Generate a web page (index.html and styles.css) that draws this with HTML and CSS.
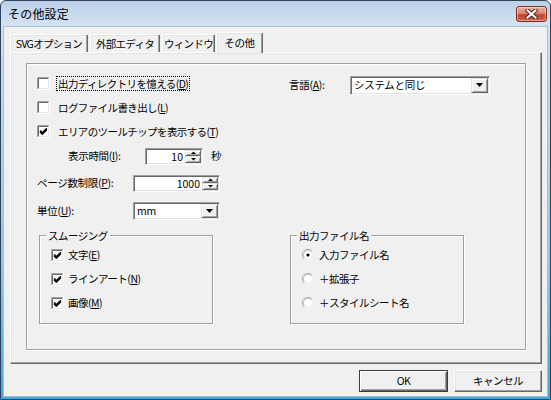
FILE: index.html
```html
<!DOCTYPE html>
<html lang="ja">
<head>
<meta charset="utf-8">
<title>その他設定</title>
<link rel="stylesheet" href="styles.css">
</head>
<body>
<div class="window">
  <div class="titlebar">
    <span class="title">その他設定</span>
    <div class="close">
      <svg width="13" height="10" viewBox="0 0 13 10">
        <path d="M2.5 1.5 L10.5 8.5 M10.5 1.5 L2.5 8.5" stroke="#5b1d12" stroke-width="4.2" stroke-linecap="square" fill="none"/>
        <path d="M2.5 1.5 L10.5 8.5 M10.5 1.5 L2.5 8.5" stroke="#ffffff" stroke-width="2.2" stroke-linecap="square" fill="none"/>
      </svg>
    </div>
  </div>
  <div class="client">
    <div class="tabs">
      <div class="tab t1">SVGオプション</div>
      <div class="tab t2">外部エディタ</div>
      <div class="tab t3">ウィンドウ</div>
      <div class="tab t4 active">その他</div>
    </div>
    <div class="panel">
      <div class="page">
        <div class="top">
          <div class="lcol">
            <div class="row r24">
              <svg class="cb" width="13" height="13" viewBox="0 0 13 13"><rect x="0" y="0" width="13" height="13" fill="#fff"/><path d="M0.5 12V0.5H12" stroke="#a0a0a0" fill="none"/><path d="M1.5 11V1.5H11" stroke="#696969" fill="none"/><path d="M1 11.5H11.5V1" stroke="#e3e3e3" fill="none"/></svg>
              <span class="lbl focus">出力ディレクトリを憶える(<u>D</u>)</span>
            </div>
            <div class="row r24">
              <svg class="cb" width="13" height="13" viewBox="0 0 13 13"><rect x="0" y="0" width="13" height="13" fill="#fff"/><path d="M0.5 12V0.5H12" stroke="#a0a0a0" fill="none"/><path d="M1.5 11V1.5H11" stroke="#696969" fill="none"/><path d="M1 11.5H11.5V1" stroke="#e3e3e3" fill="none"/></svg>
              <span class="lbl">ログファイル書き出し(<u>L</u>)</span>
            </div>
            <div class="row r24">
              <svg class="cb" width="13" height="13" viewBox="0 0 13 13"><rect x="0" y="0" width="13" height="13" fill="#fff"/><path d="M0.5 12V0.5H12" stroke="#a0a0a0" fill="none"/><path d="M1.5 11V1.5H11" stroke="#696969" fill="none"/><path d="M1 11.5H11.5V1" stroke="#e3e3e3" fill="none"/><path d="M3 5.5 L5.3 7.8 L9.8 3.3 M3 6.8 L5.3 9.1 L9.8 4.6" stroke="#000" stroke-width="1.5" fill="none"/></svg>
              <span class="lbl">エリアのツールチップを表示する(<u>T</u>)</span>
            </div>
            <div class="row r26 indent">
              <span class="flabel w77">表示時間(<u>I</u>):</span>
              <div class="spin w58">
                <span class="sval">10</span>
                <span class="sbtns">
                  <span class="sbtn"><svg width="5" height="3" viewBox="0 0 5 3"><path d="M0 3H5L2.5 0.5Z" fill="#000"/></svg></span>
                  <span class="sbtn"><svg width="5" height="3" viewBox="0 0 5 3"><path d="M0 0H5L2.5 2.5Z" fill="#000"/></svg></span>
                </span>
              </div>
              <span class="unit">秒</span>
            </div>
            <div class="row r28">
              <span class="flabel w96">ページ数制限(<u>P</u>):</span>
              <div class="spin w87">
                <span class="sval">1000</span>
                <span class="sbtns">
                  <span class="sbtn"><svg width="5" height="3" viewBox="0 0 5 3"><path d="M0 3H5L2.5 0.5Z" fill="#000"/></svg></span>
                  <span class="sbtn"><svg width="5" height="3" viewBox="0 0 5 3"><path d="M0 0H5L2.5 2.5Z" fill="#000"/></svg></span>
                </span>
              </div>
            </div>
            <div class="row r28">
              <span class="flabel w96">単位(<u>U</u>):</span>
              <div class="combo w87">
                <span class="cval">mm</span>
                <span class="dd"><svg width="7" height="4" viewBox="0 0 7 4"><path d="M0 0H7L3.5 4Z" fill="#000"/></svg></span>
              </div>
            </div>
          </div>
          <div class="rcol">
            <div class="row r28">
              <span class="flabel w61">言語(<u>A</u>):</span>
              <div class="combo w140 h19">
                <span class="cval">システムと同じ</span>
                <span class="dd"><svg width="7" height="4" viewBox="0 0 7 4"><path d="M0 0H7L3.5 4Z" fill="#000"/></svg></span>
              </div>
            </div>
          </div>
        </div>
        <div class="bottom">
          <div class="group g1">
            <span class="legend">スムージング</span>
            <div class="grow">
              <svg class="cb" width="13" height="13" viewBox="0 0 13 13"><rect x="0" y="0" width="13" height="13" fill="#fff"/><path d="M0.5 12V0.5H12" stroke="#a0a0a0" fill="none"/><path d="M1.5 11V1.5H11" stroke="#696969" fill="none"/><path d="M1 11.5H11.5V1" stroke="#e3e3e3" fill="none"/><path d="M3 5.5 L5.3 7.8 L9.8 3.3 M3 6.8 L5.3 9.1 L9.8 4.6" stroke="#000" stroke-width="1.5" fill="none"/></svg>
              <span class="glbl">文字(<u>E</u>)</span>
            </div>
            <div class="grow">
              <svg class="cb" width="13" height="13" viewBox="0 0 13 13"><rect x="0" y="0" width="13" height="13" fill="#fff"/><path d="M0.5 12V0.5H12" stroke="#a0a0a0" fill="none"/><path d="M1.5 11V1.5H11" stroke="#696969" fill="none"/><path d="M1 11.5H11.5V1" stroke="#e3e3e3" fill="none"/><path d="M3 5.5 L5.3 7.8 L9.8 3.3 M3 6.8 L5.3 9.1 L9.8 4.6" stroke="#000" stroke-width="1.5" fill="none"/></svg>
              <span class="glbl">ラインアート(<u>N</u>)</span>
            </div>
            <div class="grow">
              <svg class="cb" width="13" height="13" viewBox="0 0 13 13"><rect x="0" y="0" width="13" height="13" fill="#fff"/><path d="M0.5 12V0.5H12" stroke="#a0a0a0" fill="none"/><path d="M1.5 11V1.5H11" stroke="#696969" fill="none"/><path d="M1 11.5H11.5V1" stroke="#e3e3e3" fill="none"/><path d="M3 5.5 L5.3 7.8 L9.8 3.3 M3 6.8 L5.3 9.1 L9.8 4.6" stroke="#000" stroke-width="1.5" fill="none"/></svg>
              <span class="glbl">画像(<u>M</u>)</span>
            </div>
          </div>
          <div class="group g2">
            <span class="legend">出力ファイル名</span>
            <div class="grow">
              <svg class="rb" width="12" height="12" viewBox="0 0 12 12"><circle cx="6" cy="6" r="5.5" fill="#fff"/><path d="M2.1 9.9 A5.5 5.5 0 0 1 9.9 2.1" stroke="#a0a0a0" fill="none"/><path d="M9.9 2.1 A5.5 5.5 0 0 1 2.1 9.9" stroke="#f4f4f4" fill="none"/><path d="M2.8 9.2 A4.5 4.5 0 0 1 9.2 2.8" stroke="#c8c8c8" fill="none"/><path d="M9.2 2.8 A4.5 4.5 0 0 1 2.8 9.2" stroke="#e6e6e6" fill="none"/><circle cx="6" cy="6" r="1.6" fill="#000"/></svg>
              <span class="rlbl">入力ファイル名</span>
            </div>
            <div class="grow">
              <svg class="rb" width="12" height="12" viewBox="0 0 12 12"><circle cx="6" cy="6" r="5.5" fill="#fff"/><path d="M2.1 9.9 A5.5 5.5 0 0 1 9.9 2.1" stroke="#a0a0a0" fill="none"/><path d="M9.9 2.1 A5.5 5.5 0 0 1 2.1 9.9" stroke="#f4f4f4" fill="none"/><path d="M2.8 9.2 A4.5 4.5 0 0 1 9.2 2.8" stroke="#c8c8c8" fill="none"/><path d="M9.2 2.8 A4.5 4.5 0 0 1 2.8 9.2" stroke="#e6e6e6" fill="none"/></svg>
              <span class="rlbl">＋拡張子</span>
            </div>
            <div class="grow">
              <svg class="rb" width="12" height="12" viewBox="0 0 12 12"><circle cx="6" cy="6" r="5.5" fill="#fff"/><path d="M2.1 9.9 A5.5 5.5 0 0 1 9.9 2.1" stroke="#a0a0a0" fill="none"/><path d="M9.9 2.1 A5.5 5.5 0 0 1 2.1 9.9" stroke="#f4f4f4" fill="none"/><path d="M2.8 9.2 A4.5 4.5 0 0 1 9.2 2.8" stroke="#c8c8c8" fill="none"/><path d="M9.2 2.8 A4.5 4.5 0 0 1 2.8 9.2" stroke="#e6e6e6" fill="none"/></svg>
              <span class="rlbl">＋スタイルシート名</span>
            </div>
          </div>
        </div>
      </div>
    </div>
    <div class="buttons">
      <div class="btn default">OK</div>
      <div class="btn cancel">キャンセル</div>
    </div>
  </div>
</div>
</body>
</html>
```
FILE: styles.css
```css
* { box-sizing: border-box; }
html, body { margin: 0; padding: 0; }
body {
  width: 551px;
  height: 400px;
  overflow: hidden;
  background: #ffffff;
  font-family: "Noto Sans CJK JP", "Noto Sans", sans-serif;
  font-size: 10.5px;
  letter-spacing: -0.5px;
  line-height: 14px;
  color: #000;
}
svg { display: block; flex: none; }

.window {
  width: 551px;
  height: 400px;
  border: 1px solid #2f4257;
  border-radius: 6px 6px 0 0;
  background: linear-gradient(to bottom, #bcd1e9 0px, #d4e3f3 25px, #c6d9ee 70px, #94c7ea 260px, #3aa8e1 398px);
  display: flex;
  flex-direction: column;
}

.titlebar {
  height: 25px;
  flex: none;
  display: flex;
  align-items: center;
  padding: 0 3px 0 7px;
}
.title {
  flex: 1;
  font-size: 12px;
  letter-spacing: 0.2px;
  line-height: 16px;
  color: #000;
}
.close {
  width: 31px;
  height: 16px;
  border: 1px solid #7a2e22;
  border-radius: 3px;
  background: linear-gradient(to bottom, #eab0a3 0%, #d98672 45%, #c4472f 55%, #cf6247 100%);
  box-shadow: inset 0 0 0 1px rgba(255, 235, 230, 0.45);
  display: flex;
  align-items: center;
  justify-content: center;
}

.client {
  flex: 1;
  margin: 0 2px 2px 2px;
  background: #f0f0f0;
  border: 1px solid #aabdd3;
  display: flex;
  flex-direction: column;
}

.tabs {
  display: flex;
  align-items: flex-end;
  height: 25px;
  padding-left: 6px;
  flex: none;
}
.tab {
  height: 18px;
  border-top: 1px solid #ffffff;
  border-left: 1px solid #ffffff;
  border-right: 1px solid #696969;
  box-shadow: inset -1px 0 0 #a0a0a0, inset 1px 1px 0 #e3e3e3;
  border-radius: 2px 2px 0 0;
  text-align: center;
  padding-top: 2px;
  white-space: nowrap;
  letter-spacing: -0.7px;
}
.t1 { width: 78px; }
.t2 { width: 70px; margin-left: 2px; }
.t3 { width: 53px; margin-left: 2px; }
.t4 { width: 47px; margin-left: 1px; }
.tab.active {
  height: 21px;
  margin-bottom: -1px;
  background: #f0f0f0;
  position: relative;
  z-index: 1;
  padding-top: 3px;
  letter-spacing: -0.3px;
}

.panel {
  width: 532px;
  height: 312px;
  margin-left: 6px;
  flex: none;
  border-top: 1px solid #ffffff;
  border-left: 1px solid #ffffff;
  border-right: 1px solid #696969;
  border-bottom: 1px solid #696969;
  box-shadow: inset -1px -1px 0 #a0a0a0, inset 1px 1px 0 #e3e3e3;
  padding: 10px 0 0 15px;
}

.page {
  width: 500px;
  height: 287px;
  border: 1px solid #a0a0a0;
  box-shadow: 1px 1px 0 #ffffff, inset 1px 1px 0 #ffffff;
  padding: 7px 0 0 10px;
  display: flex;
  flex-direction: column;
}

.top { display: flex; }
.lcol { width: 252px; display: flex; flex-direction: column; }
.rcol { display: flex; flex-direction: column; }

.row { display: flex; align-items: center; white-space: nowrap; }
.r24 { height: 24px; }
.r26 { height: 26px; }
.r28 { height: 28px; }
.indent { padding-left: 31px; }

.lbl {
  margin-left: 6px;
  border: 1px solid transparent;
  padding: 0 1px;
  line-height: 13px;
  letter-spacing: -0.6px;
}
.lbl.focus { border: 1px dotted #000; }

.flabel { flex: none; letter-spacing: -0.3px; }
.w77 { width: 77px; }
.w96 { width: 96px; }
.w61 { width: 61px; }
.unit { margin-left: 8px; }

.spin, .combo {
  display: flex;
  height: 17px;
  background: #ffffff;
  border: 1px solid;
  border-color: #a0a0a0 #ffffff #ffffff #a0a0a0;
  box-shadow: inset 1px 1px 0 #696969, inset -1px -1px 0 #e3e3e3;
  padding: 1px;
  flex: none;
}
.combo { height: 18px; }
.h19 { height: 19px; }
.w58 { width: 58px; }
.w87 { width: 87px; }
.w140 { width: 140px; }

.sval {
  flex: 1;
  text-align: right;
  padding-right: 2px;
  line-height: 13px;
  letter-spacing: 0;
}
.sbtns {
  width: 16px;
  display: flex;
  flex-direction: column;
}
.sbtn, .dd {
  background: #f0f0f0;
  border: 1px solid;
  border-color: #e3e3e3 #696969 #696969 #e3e3e3;
  box-shadow: inset 1px 1px 0 #ffffff, inset -1px -1px 0 #a0a0a0;
  display: flex;
  align-items: center;
  justify-content: center;
}
.sbtn { flex: 1; }
.dd { width: 17px; }

.cval {
  flex: 1;
  padding-left: 2px;
  line-height: 14px;
  letter-spacing: -0.3px;
}

.bottom {
  display: flex;
  margin-top: 10px;
}
.group {
  width: 174px;
  height: 89px;
  border: 1px solid #a0a0a0;
  box-shadow: 1px 1px 0 #ffffff, inset 1px 1px 0 #ffffff;
  display: flex;
  flex-direction: column;
}
.g1 { margin-left: 2px; }
.g2 { margin-left: 77px; }
.legend {
  align-self: flex-start;
  margin: -7px 0 0 6px;
  padding: 0 2px;
  height: 14px;
  line-height: 14px;
  background: #f0f0f0;
}
.grow {
  height: 24px;
  display: flex;
  align-items: center;
  padding-left: 11px;
  white-space: nowrap;
}
.glbl { margin-left: 4px; }
.rlbl { margin-left: 5px; }

.buttons {
  display: flex;
  justify-content: flex-end;
  gap: 6px;
  margin-top: 6px;
  padding-right: 5px;
}
.btn {
  height: 22px;
  background: #f0f0f0;
  border: 1px solid;
  border-color: #ffffff #696969 #696969 #ffffff;
  box-shadow: inset -1px -1px 0 #a0a0a0, inset 1px 1px 0 #e3e3e3;
  display: flex;
  align-items: center;
  justify-content: center;
  white-space: nowrap;
}
.btn.default {
  width: 89px;
  border: 1px solid #3c3c3c;
  box-shadow: inset 1px 1px 0 #ffffff, inset -1px -1px 0 #696969, inset -2px -2px 0 #a0a0a0;
}
.btn.cancel { width: 88px; }
```
